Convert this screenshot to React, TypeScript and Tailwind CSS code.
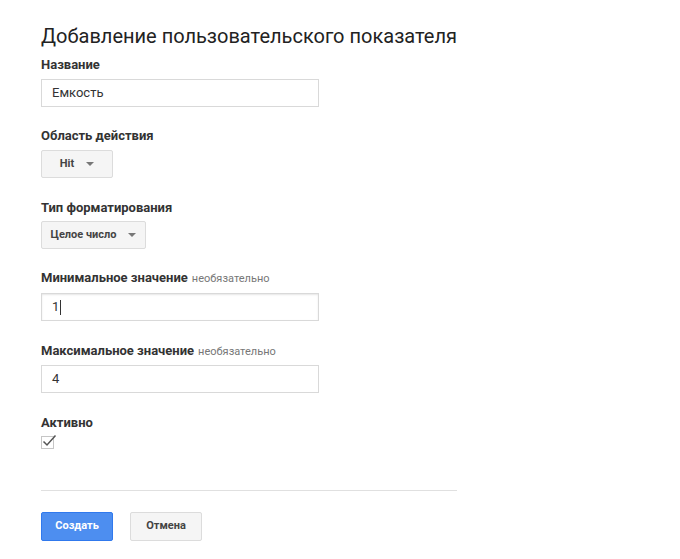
export default function App() {
  const label = "text-[13px] font-bold text-[#333] leading-[16px]";
  const input = "w-[278px] h-[28px] border border-[#d9d9d9] px-[10px] text-[13px] text-[#333] flex items-center";
  const Arrow = () => (
    <svg width="8" height="4" viewBox="0 0 8 4" className="ml-[12px]"><path d="M0 0h8L4 4z" fill="#777" /></svg>
  );
  return (
    <div className="w-[680px] h-[559px] bg-white pl-[41px] pt-[24px]" style={{ fontFamily: "Roboto, Arial, sans-serif" }}>
      <div className="text-[20px] text-[#222] leading-[24px]">Добавление пользовательского показателя</div>
      <div className={`${label} mt-[9px]`}>Название</div>
      <div className={`${input} mt-[6px]`}>Емкость</div>
      <div className={`${label} mt-[21px]`}>Область действия</div>
      <div className="mt-[6px] w-[72px] h-[28px] bg-[#f5f5f5] border border-[#dcdcdc] rounded-[2px] flex items-center justify-center text-[11px] font-bold text-[#444]">Hit<Arrow /></div>
      <div className={`${label} mt-[22px]`}>Тип форматирования</div>
      <div className="mt-[5px] w-[105px] h-[28px] bg-[#f5f5f5] border border-[#dcdcdc] rounded-[2px] flex items-center justify-center text-[11px] font-bold text-[#444]">Целое число<Arrow /></div>
      <div className={`${label} mt-[21px] flex items-baseline gap-[4px]`}>Минимальное значение <span className="text-[11px] font-normal text-[#777]">необязательно</span></div>
      <div className={`${input} mt-[6px] border-[#4d90fe]/70 shadow-[inset_0_1px_2px_rgba(0,0,0,0.1)]`}>1<span className="w-px h-[15px] bg-[#333] ml-[1px]"></span></div>
      <div className={`${label} mt-[22px] flex items-baseline gap-[4px]`}>Максимальное значение <span className="text-[11px] font-normal text-[#777]">необязательно</span></div>
      <div className={`${input} mt-[5px]`}>4</div>
      <div className={`${label} mt-[22px]`}>Активно</div>
      <div className="mt-[5px] w-[13px] h-[13px] border border-[#c6c6c6] bg-white relative">
        <svg width="15" height="13" viewBox="0 0 15 13" className="absolute left-[0px] top-[-3px]"><path d="M1.5 7.5l3.5 3.5L13.5 1.5" stroke="#555" strokeWidth="1.5" fill="none" /></svg>
      </div>
      <div className="mt-[41px] w-[416px] h-px bg-[#e0e0e0]"></div>
      <div className="mt-[21px] flex gap-[17px]">
        <div className="w-[72px] h-[29px] rounded-[2px] bg-[#4d8ef0] border border-[#3079ed] text-white text-[11px] font-bold flex items-center justify-center">Создать</div>
        <div className="w-[72px] h-[29px] rounded-[2px] bg-[#f5f5f5] border border-[#dcdcdc] text-[#444] text-[11px] font-bold flex items-center justify-center">Отмена</div>
      </div>
    </div>
  );
}
